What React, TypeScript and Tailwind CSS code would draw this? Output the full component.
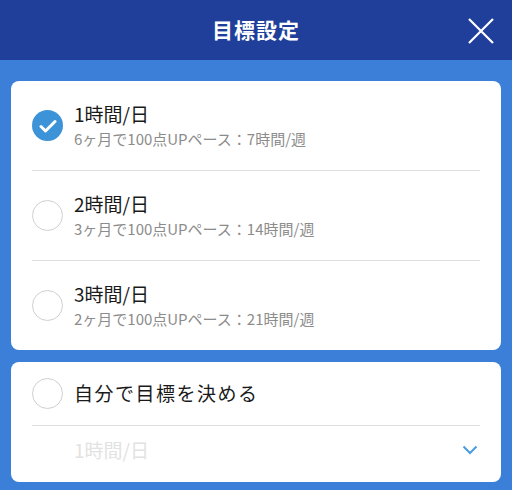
import React from 'react';

const options = [
  { title: '1時間/日', note: '6ヶ月で100点UPペース：7時間/週', checked: true },
  { title: '2時間/日', note: '3ヶ月で100点UPペース：14時間/週', checked: false },
  { title: '3時間/日', note: '2ヶ月で100点UPペース：21時間/週', checked: false },
];

function Radio({ checked }: { checked: boolean }) {
  if (checked) {
    return (
      <div className="w-[31px] h-[31px] rounded-full bg-[#3d93d8] flex items-center justify-center shrink-0">
        <svg width="18" height="14" viewBox="0 0 18 14" fill="none">
          <path d="M2 7.5l4.5 4.5L16 2.5" stroke="white" strokeWidth="3" strokeLinecap="round" strokeLinejoin="round" />
        </svg>
      </div>
    );
  }
  return <div className="w-[31px] h-[31px] rounded-full border border-[#cfcfcf] bg-white shrink-0" />;
}

export default function App() {
  return (
    <div
      className="w-[512px] h-[490px] bg-[#3c7fd9] overflow-hidden"
      style={{ fontFamily: '"Noto Sans CJK JP", "Noto Sans", sans-serif' }}
    >
      {/* Header */}
      <div className="h-[60px] bg-[#1f3f9b] relative flex items-center justify-center">
        <h1 className="text-white text-[21px] font-bold tracking-[1px]">目標設定</h1>
        <button className="absolute right-[18px] top-[18px] w-[26px] h-[26px]">
          <svg width="26" height="26" viewBox="0 0 26 26">
            <path d="M1 1L25 25M25 1L1 25" stroke="white" strokeWidth="2.2" />
          </svg>
        </button>
      </div>

      <div className="px-[11px] pt-[21px] flex flex-col gap-[12px]">
        {/* Preset options */}
        <div className="bg-white rounded-[8px]">
          {options.map((o, i) => (
            <div key={i} className="mx-[21px]">
              <div className="h-[89px] flex items-center gap-[11px]">
                <Radio checked={o.checked} />
                <div className="flex flex-col">
                  <span className="text-[19px] leading-[24px] text-[#1a1a1a]">{o.title}</span>
                  <span className="text-[15px] leading-[20px] text-[#8c8c8c] mt-[3px]">{o.note}</span>
                </div>
              </div>
              {i < options.length - 1 && <div className="h-px bg-[#dedede]" />}
            </div>
          ))}
        </div>

        {/* Custom target */}
        <div className="bg-white rounded-[8px]">
          <div className="mx-[21px] pb-[8px]">
            <div className="h-[63px] flex items-center gap-[11px]">
              <Radio checked={false} />
              <span className="text-[19px] tracking-[1.5px] text-[#1a1a1a]">自分で目標を決める</span>
            </div>
            <div className="h-px bg-[#dedede]" />
            <div className="h-[48px] flex items-center justify-between pl-[42px] pr-[2px]">
              <span className="text-[19px] text-[#e2e2e2]">1時間/日</span>
              <svg width="16" height="10" viewBox="0 0 16 10">
                <path d="M1.5 1.5L8 8L14.5 1.5" stroke="#4a9be0" strokeWidth="2" fill="none" />
              </svg>
            </div>
          </div>
        </div>
      </div>
    </div>
  );
}
